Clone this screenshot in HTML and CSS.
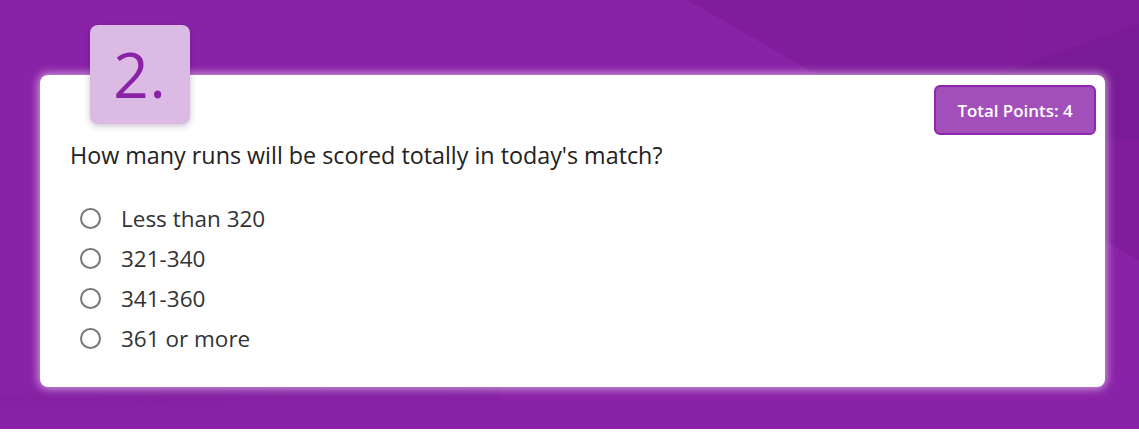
FILE: index.html
```html
<!DOCTYPE html>
<html lang="en">
<head>
<meta charset="utf-8">
<title>Quiz question</title>
<link rel="stylesheet" href="styles.css">
</head>
<body>
<section class="stage">
  <div class="qnum">2.</div>
  <div class="card">
    <div class="card-head">
      <span class="points">Total Points: 4</span>
    </div>
    <p class="question">How many runs will be scored totally in today's match?</p>
    <ul class="options">
      <li class="option"><span class="radio"></span><span class="label">Less than 320</span></li>
      <li class="option"><span class="radio"></span><span class="label">321-340</span></li>
      <li class="option"><span class="radio"></span><span class="label">341-360</span></li>
      <li class="option"><span class="radio"></span><span class="label">361 or more</span></li>
    </ul>
  </div>
</section>
</body>
</html>
```
FILE: styles.css
```css
html, body {
  margin: 0;
  padding: 0;
  background: #ffffff;
}

body {
  font-family: "Open Sans", "Noto Sans", "Liberation Sans", sans-serif;
}

.stage {
  height: 429px;
  box-sizing: border-box;
  padding: 25px 34px 0 40px;
  background:
    linear-gradient(-150deg, rgba(70,0,90,0.14) 0 24%, rgba(70,0,90,0) 24%),
    linear-gradient(160deg, rgba(70,0,90,0) 0 62%, rgba(70,0,90,0.10) 62% 100%) top right / 460px 140px no-repeat,
    linear-gradient(178deg, rgba(70,0,90,0) 0 86%, rgba(70,0,90,0.08) 90%, rgba(70,0,90,0) 95%) left bottom / 500px 100% no-repeat,
    #8a22a8;
}

.qnum {
  position: relative;
  z-index: 1;
  width: 100px;
  height: 99px;
  margin: 0 0 -49px 50px;
  box-sizing: border-box;
  background: #dbbae3;
  border-radius: 8px;
  box-shadow: 0 2px 6px rgba(60, 0, 80, 0.25);
  color: #8a22a8;
  font-size: 62px;
  font-weight: 500;
  line-height: 99px;
  text-align: center;
  letter-spacing: 1px;
}

.card {
  height: 312px;
  box-sizing: border-box;
  padding: 10px 9px 0 30px;
  background: #ffffff;
  border-radius: 8px;
  box-shadow: 0 0 8px 2px rgba(255, 255, 255, 0.55);
}

.card-head {
  display: flex;
  justify-content: flex-end;
}

.points {
  display: flex;
  align-items: center;
  justify-content: center;
  width: 162px;
  height: 50px;
  box-sizing: border-box;
  background: #a24fba;
  border: 2px solid #8f26ab;
  border-radius: 6px;
  color: #ffffff;
  font-size: 16.9px;
  font-weight: 600;
}

.question {
  margin: 6px 0 0 0;
  font-size: 23.3px;
  font-weight: 500;
  line-height: 28px;
  color: #222222;
}

.options {
  list-style: none;
  margin: 29px 0 0 0;
  padding: 0;
}

.option {
  display: flex;
  align-items: center;
  height: 40px;
}

.radio {
  width: 21px;
  height: 21px;
  box-sizing: border-box;
  margin-left: 10px;
  border: 2px solid #777777;
  border-radius: 50%;
}

.label {
  margin-left: 20px;
  font-size: 22.5px;
  color: #333333;
}
```
